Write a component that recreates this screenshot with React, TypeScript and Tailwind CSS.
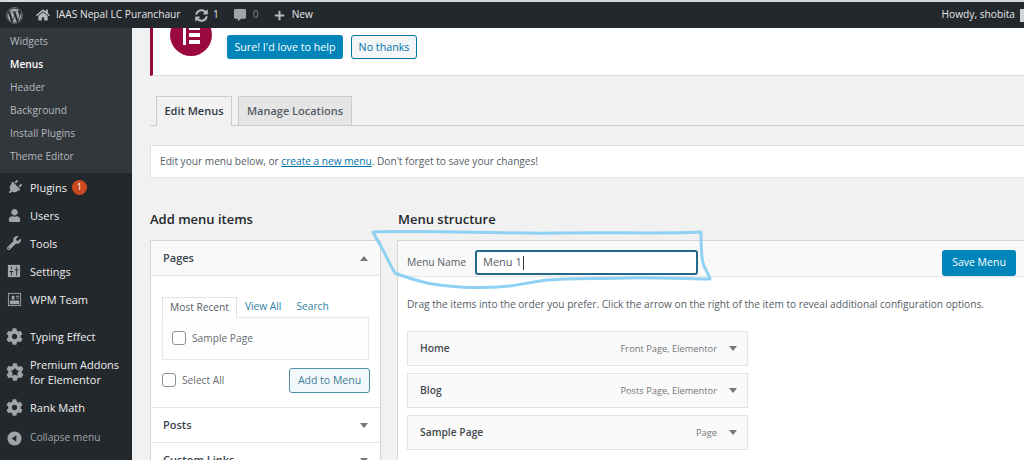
import React from 'react';
import { FaWordpress, FaHome, FaSyncAlt, FaCommentAlt, FaPlus, FaPlug, FaUser, FaWrench, FaCog } from 'react-icons/fa';

const submenu = ['Widgets', 'Menus', 'Header', 'Background', 'Install Plugins', 'Theme Editor'];

function SettingsIcon() {
  return (
    <svg viewBox="0 0 16 16" className="w-[14px] h-[14px]">
      <path fill="#a0a5aa" d="M1 1h14v14H1z" />
      <path fill="#23282d" d="M3 8h4v1H3zM4.500 9h1v4h-1zM9 6h4v1H9zM10.500 7h1v6h-1zM4.500 3h1v3h-1zM10.500 3h1v2h-1z" />
    </svg>
  );
}

function TeamIcon() {
  return (
    <svg viewBox="0 0 16 16" className="w-[15px] h-[15px]">
      <path fill="#a0a5aa" d="M1 1h14v14H1z" />
      <path fill="#23282d" d="M2 2h12v12H2z" />
      <path fill="#a0a5aa" d="M3 9h10v4H3zM5 4h3v4H5zM9.500 4H13v1H9.500zM9.500 6H13v1H9.500z" />
    </svg>
  );
}

function StarGearIcon() {
  return (
    <span className="relative flex items-center justify-center -ml-[1px]">
      <FaCog className="w-[18px] h-[18px] text-[#a0a5aa]" />
      <svg viewBox="0 0 16 16" className="absolute w-[10px] h-[10px]">
        <path fill="#23282d" d="M8 1l2.100 4.600 5 .5-3.700 3.300 1 4.900L8 11.800l-4.400 2.500 1-4.900L.9 6.100l5-.5z" />
      </svg>
    </span>
  );
}

function CollapseIcon() {
  return (
    <svg viewBox="0 0 16 16" className="w-[15px] h-[15px]">
      <circle cx="8" cy="8" r="7.500" fill="#a0a5aa" />
      <path fill="#23282d" d="M10 4.500v7L5 8z" />
    </svg>
  );
}

function MenuRow({ icon, label, badge, className = 'h-[28px]' }: { icon: React.ReactNode; label: React.ReactNode; badge?: string; className?: string }) {
  return (
    <div className={`flex items-center text-[#eeeeee] text-[11px] ${className}`}>
      <span className="w-[30px] pl-[7px] shrink-0 flex items-center text-[#a0a5aa]">{icon}</span>
      <span className="leading-[15px]">{label}</span>
      {badge && (
        <span className="ml-[5px] w-[15px] h-[15px] rounded-full bg-[#ca4a1f] text-white text-[9px] flex items-center justify-center">{badge}</span>
      )}
    </div>
  );
}

function Sidebar() {
  return (
    <aside className="w-[132px] shrink-0 bg-[#23282d] flex flex-col">
      <div className="bg-[#32373c] h-[145px] pt-[2px]">
        {submenu.map((item) => (
          <div key={item} className={`h-[23px] pl-[10px] flex items-center text-[10.200px] ${item === 'Menus' ? 'text-white font-semibold' : 'text-[#b4b9be]'}`}>
            {item}
          </div>
        ))}
      </div>
      <MenuRow icon={<FaPlug className="w-[15px] h-[15px] rotate-45" />} label="Plugins" badge="1" />
      <MenuRow icon={<FaUser className="w-[13px] h-[13px] ml-[1px]" />} label="Users" />
      <MenuRow icon={<FaWrench className="w-[14px] h-[14px]" />} label="Tools" />
      <MenuRow icon={<SettingsIcon />} label="Settings" />
      <MenuRow icon={<TeamIcon />} label="WPM Team" />
      <div className="h-[9px]" />
      <MenuRow icon={<FaCog className="w-[17px] h-[17px] -ml-[1px]" />} label="Typing Effect" />
      <MenuRow icon={<StarGearIcon />} label={<>Premium Addons<br />for Elementor</>} className="h-[43px]" />
      <MenuRow icon={<FaCog className="w-[17px] h-[17px] -ml-[1px]" />} label="Rank Math" />
      <div className="h-[31px] pt-[3px] flex items-center text-[#a0a5aa] text-[10.200px]">
        <span className="w-[30px] pl-[7px]"><CollapseIcon /></span>
        Collapse menu
      </div>
    </aside>
  );
}

function TopBar() {
  return (
    <header className="h-[28px] shrink-0 border-t-2 border-[#d9d9d9] bg-[#23282d] flex items-center text-[#e4e6e7] text-[10.200px]">
      <FaWordpress className="ml-[6px] w-[17px] h-[17px] text-[#a0a5aa]" />
      <FaHome className="ml-[13px] w-[14px] h-[14px] text-[#b4b9be]" />
      <span className="ml-[6px] w-[125px] whitespace-nowrap">IAAS Nepal LC Puranchaur</span>
      <FaSyncAlt className="ml-[14px] w-[13px] h-[13px] text-[#b4b9be]" />
      <span className="ml-[5px]">1</span>
      <FaCommentAlt className="ml-[15px] w-[12px] h-[12px] text-[#a0a5aa]" />
      <span className="ml-[7px] text-[#82878c]">0</span>
      <FaPlus className="ml-[15px] w-[11px] h-[11px] text-[#b4b9be]" />
      <span className="ml-[7px]">New</span>
      <span className="ml-auto mr-[5px]">Howdy, shobita</span>
      <span className="w-[4px] h-[13px] bg-[#d5d5d5]" />
    </header>
  );
}

function Caret({ up }: { up?: boolean }) {
  return <span className={`w-0 h-0 border-x-[4px] border-x-transparent ${up ? 'border-b-[5px] border-b-[#72777c]' : 'border-t-[5px] border-t-[#72777c]'}`} />;
}

function Check({ label }: { label: string }) {
  return (
    <label className="flex items-center gap-[6px] text-[10.200px] text-[#666c72]">
      <span className="w-[14px] h-[14px] rounded-[3px] border border-[#8d9398] bg-white" />
      {label}
    </label>
  );
}

function AddItems() {
  return (
    <section className="w-[231px] shrink-0">
      <h2 className="h-[21px] text-[13px] leading-[21px] font-semibold text-[#23282d]">Add menu items</h2>
      <div className="mt-[10px] border border-[#d5d5d5] bg-white">
        <div className="h-[35px] px-[12px] flex items-center justify-between border-b border-[#e5e5e5] bg-[#f9f9f9] text-[11px] font-semibold text-[#3c434a]">
          Pages <Caret up />
        </div>
        <div className="h-[132px] px-[11px] border-b border-[#e5e5e5]">
          <div className="pt-[20px] flex items-end text-[10.200px] text-[#2f7f9f]">
            <span className="h-[21px] px-[7px] border border-b-0 border-[#e1e1e1] text-[#555d66] flex items-center relative z-10 bg-white -mb-[1px]">Most Recent</span>
            <span className="h-[21px] ml-[8px] flex items-center">View All</span>
            <span className="h-[21px] ml-[15px] flex items-center">Search</span>
          </div>
          <div className="h-[43px] border border-[#e8e8e8] bg-[#fdfdfd] pl-[9px] flex items-center">
            <Check label="Sample Page" />
          </div>
          <div className="mt-[8px] -mr-[1px] flex items-center justify-between">
            <Check label="Select All" />
            <button className="w-[81px] h-[25px] rounded-[3px] border border-[#4f8ea8] bg-[#f3f8fa] text-[10.500px] text-[#3f7d99]">Add to Menu</button>
          </div>
        </div>
        <div className="h-[35px] px-[12px] flex items-center justify-between border-b border-[#e5e5e5] text-[11px] font-semibold text-[#3c434a]">
          Posts <Caret />
        </div>
        <div className="h-[35px] px-[12px] flex items-center justify-between text-[11px] font-semibold text-[#3c434a]">
          Custom Links <Caret />
        </div>
      </div>
    </section>
  );
}

function MenuItem({ title, type }: { title: string; type: string }) {
  return (
    <div className="h-[35px] w-[341px] pl-[12px] pr-[10px] flex items-center border border-[#e3e3e3] bg-[#fafafa]">
      <span className="text-[10.300px] font-semibold text-[#44494e]">{title}</span>
      <span className="ml-auto text-[9.300px] text-[#72777c]">{type}</span>
      <span className="ml-[12px] flex"><Caret /></span>
    </div>
  );
}

function MenuStructure() {
  return (
    <section className="flex-1 min-w-0">
      <h2 className="h-[21px] pl-[1px] text-[13px] leading-[21px] font-semibold text-[#23282d]">Menu structure</h2>
      <div className="mt-[10px] border border-r-0 border-[#d5d5d5] bg-white">
        <div className="h-[36px] pt-[8px] pl-[9px] pr-[8px] flex items-center border-b border-[#e5e5e5] bg-[#f9f9f9]">
          <span className="text-[10.300px] text-[#555d66] w-[68px]">Menu Name</span>
          <div className="w-[223px] h-[25px] rounded-[3px] border-2 border-[#23698a] bg-white pl-[6px] flex items-center text-[11px] text-[#555d66]">
            Menu 1<span className="w-px h-[14px] bg-[#333] ml-[1px]" />
          </div>
          <button className="ml-auto w-[74px] h-[26px] rounded-[3px] bg-[#0085ba] text-white text-[10.500px]">Save Menu</button>
        </div>
        <p className="mt-[20px] ml-[9px] h-[15px] leading-[15px] text-[10.150px] text-[#555d66] whitespace-nowrap">
          Drag the items into the order you prefer. Click the arrow on the right of the item to reveal additional configuration options.
        </p>
        <div className="mt-[19px] ml-[9px] flex flex-col gap-[7px] pb-[20px]">
          <MenuItem title="Home" type="Front Page, Elementor" />
          <MenuItem title="Blog" type="Posts Page, Elementor" />
          <MenuItem title="Sample Page" type="Page" />
        </div>
      </div>
    </section>
  );
}

function Notice() {
  return (
    <div className="h-[48px] shrink-0 border-l-[3px] border-l-[#9b0a3f] border-b border-b-[#dddddd] bg-white flex overflow-hidden">
      <div className="ml-[17px] -mt-[14px] w-[42px] h-[42px] rounded-full bg-[#9b0a3f] flex items-center justify-center gap-[3px] shrink-0">
        <span className="w-[3px] h-[20px] bg-white" />
        <span className="flex flex-col gap-[3px]">
          <span className="w-[11px] h-[4px] bg-white" />
          <span className="w-[11px] h-[4px] bg-white" />
          <span className="w-[11px] h-[4px] bg-white" />
        </span>
      </div>
      <button className="ml-[15px] mt-[7px] w-[116px] h-[24px] rounded-[3px] bg-[#0085ba] text-white text-[10.700px]">Sure! I'd love to help</button>
      <button className="ml-[8px] mt-[7px] w-[66px] h-[24px] rounded-[3px] border border-[#0073aa] bg-[#f3f5f6] text-[#0073aa] text-[10.700px]">No thanks</button>
    </div>
  );
}

function Tabs() {
  return (
    <div className="mt-[20px] h-[30px] pl-[6px] flex items-end gap-[6px] border-b border-[#cccccc] text-[11px] font-semibold">
      <div className="h-[30px] w-[76px] -mb-px border border-b-0 border-[#cccccc] bg-[#f1f1f1] text-[#32373c] flex items-center justify-center">Edit Menus</div>
      <div className="h-[29px] w-[114px] border border-b-0 border-[#cccccc] bg-[#e5e5e5] text-[#555d66] flex items-center justify-center">Manage Locations</div>
    </div>
  );
}

export default function App() {
  return (
    <div className="relative w-[1024px] h-[460px] overflow-hidden bg-[#f1f1f1] flex flex-col font-['Open_Sans',sans-serif]">
      <TopBar />
      <div className="flex flex-1 min-h-0">
        <Sidebar />
        <main className="flex-1 min-w-0 pl-[18px] flex flex-col">
          <Notice />
          <Tabs />
          <div className="mt-[19px] h-[33px] shrink-0 border border-r-0 border-[#e1e1e1] bg-white pl-[9px] flex items-center text-[10.150px] text-[#555d66]">
            <span>Edit your menu below, or <span className="text-[#0073aa] underline">create a new menu</span>. Don't forget to save your changes!</span>
          </div>
          <div className="mt-[31px] flex gap-[16px]">
            <AddItems />
            <MenuStructure />
          </div>
        </main>
      </div>
      {/* hand drawn highlight around the menu name */}
      <svg viewBox="0 0 1024 460" className="absolute inset-0 w-[1024px] h-[460px] pointer-events-none" fill="none">
        <path
          d="M373 232C430 230 500 234 560 233C610 232 660 234 701 232C701 245 701 255 703 263C705 270 709 274 710 279C680 279 650 277 627 278C600 279 570 278 547 280C530 282 520 285 510 286C490 288 475 288 460 287C447 286 435 285 427 283C415 280 405 277 395 273C390 265 387 258 383 250C379 243 376 238 373 232Z"
          stroke="#8ed1f2"
          strokeWidth="3"
          strokeLinejoin="round"
        />
      </svg>
    </div>
  );
}
